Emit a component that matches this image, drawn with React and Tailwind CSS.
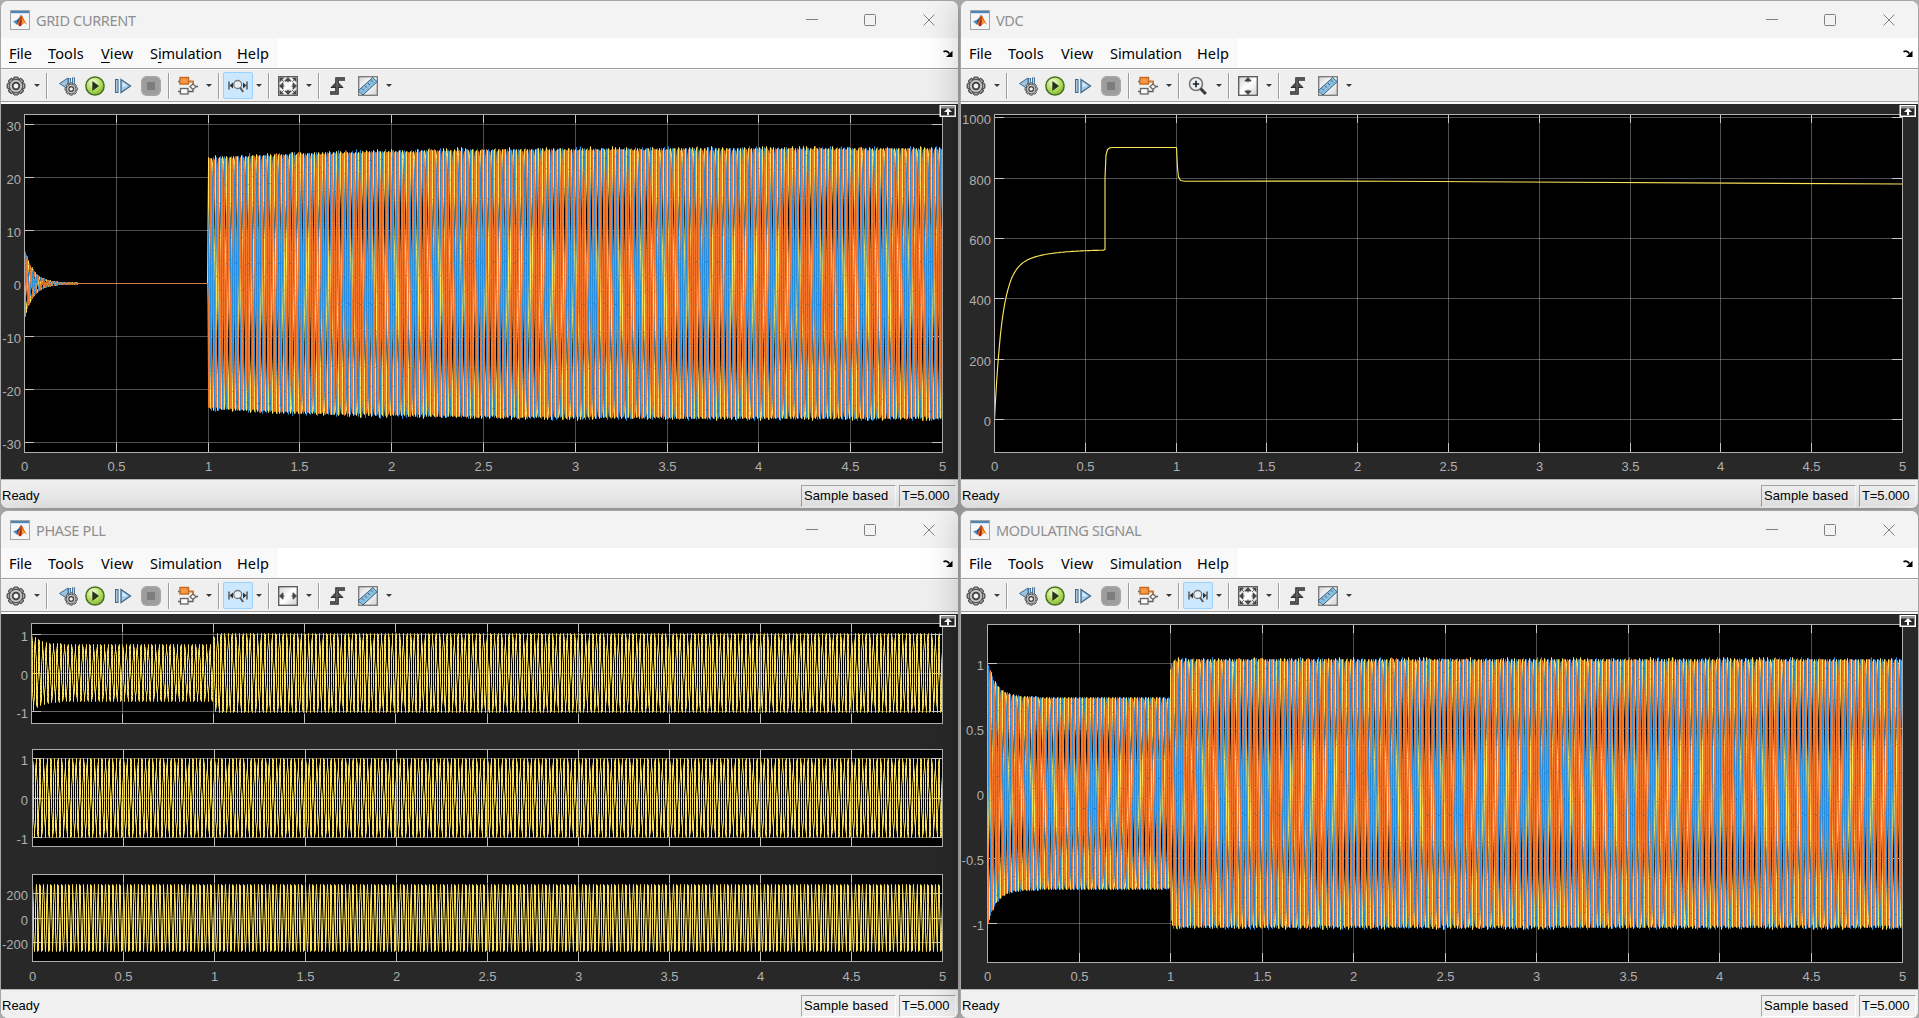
import React from "react";

const YELLOW = "#fce35a";
const BLUE = "#268cdd";
const ORANGE = "#f4772c";
const AXIS = "#afafaf";

/* ---------- signal helpers ---------- */

const noise = (n) => {
  const s = Math.sin(n * 127.1 + 11.7) * 43758.5453;
  return s - Math.floor(s);
};

function wavePath({ left, right, zero, unit, amp, phase = 0, jitter = 0, freq = 50, steps = 20 }) {
  const total = 5 * freq * steps;
  let d = "";
  let last = "";
  for (let i = 0; i <= total; i++) {
    const t = i / (freq * steps);
    const half = Math.floor(t * freq * 2 + phase / Math.PI);
    const a = amp(t) + (t > 1 ? jitter * Math.pow(noise(half + phase * 7), 3) : 0);
    const v = a * Math.sin(2 * Math.PI * freq * t + phase);
    const x = Math.round(left + (t / 5) * (right - left)) + 0.5;
    const y = Math.round(zero - v * unit) + 0.5;
    const p = x + " " + y;
    if (p !== last) d += (d ? "L" : "M") + p;
    last = p;
  }
  return d;
}

/* ---------- chart pieces ---------- */

function Axes({ left, right, top, bottom, yTicks, labelX, xLabels, gridOver, children }) {
  const xs = Array.from({ length: 11 }, (_, i) => Math.round(left + (i * (right - left)) / 10) + 0.5);
  const grid = (opacity) => (
    <g stroke={AXIS} strokeOpacity={opacity}>
      {xs.slice(1, 10).map((x) => (
        <line key={x} x1={x} x2={x} y1={top} y2={bottom} />
      ))}
      {yTicks.map(([y]) => (
        <line key={y} x1={left} x2={right} y1={y + 0.5} y2={y + 0.5} />
      ))}
    </g>
  );
  return (
    <g>
      <rect x={left} y={top} width={right - left} height={bottom - top} fill="#000" />
      {grid(0.45)}
      <g stroke="#c4c4c4">
        {xs.slice(1, 10).map((x) => (
          <path key={x} d={`M${x} ${top}v9M${x} ${bottom}v-9`} />
        ))}
        {yTicks.map(([y]) => (
          <path key={y} d={`M${left} ${y + 0.5}h10M${right} ${y + 0.5}h-10`} />
        ))}
      </g>
      {children}
      {gridOver && grid(0.22)}
      <rect x={left + 0.5} y={top + 0.5} width={right - left} height={bottom - top} fill="none" stroke={AXIS} />
      <g fill={AXIS} fontFamily="Liberation Sans, Arial, sans-serif" fontSize="13">
        {yTicks.map(([y, label]) => (
          <text key={y} x={labelX} y={y + 7} textAnchor="end">
            {label}
          </text>
        ))}
        {xLabels &&
          xs.map((x, i) => (
            <text key={x} x={x} y="470.5" textAnchor="middle">
              {i / 2}
            </text>
          ))}
      </g>
    </g>
  );
}

const Trace = ({ color, d, width = 1 }) => (
  <path d={d} fill="none" stroke={color} strokeWidth={width} strokeLinejoin="bevel" />
);

function ThreePhase({ spec }) {
  const k = (2 * Math.PI) / 3;
  return (
    <>
      <Trace color={YELLOW} d={wavePath({ ...spec, phase: 1.2 })} />
      <Trace color={BLUE} d={wavePath({ ...spec, phase: 1.2 - k })} />
      <Trace color={ORANGE} d={wavePath({ ...spec, phase: 1.2 + k })} />
    </>
  );
}

const modAmp = (t) => (t < 1 ? 0.735 + 0.28 * Math.exp(-t / 0.045) + 0.02 * Math.exp(-t / 0.3) : 1.03 - 0.1 * Math.exp(-(t - 1) / 0.006));

function GridCurrentPlot() {
  const amp = (t) =>
    t < 1 ? 6.2 * Math.exp(-t / 0.045) + 0.6 * Math.exp(-t / 0.15) : 25.5 - 1.9 * Math.exp(-(t - 1) / 0.8);
  return (
    <Axes
      left={24}
      right={942}
      top={114}
      bottom={452}
      labelX={21}
      xLabels
      yTicks={[
        [124, "30"],
        [177, "20"],
        [230, "10"],
        [283, "0"],
        [336, "-10"],
        [389, "-20"],
        [442, "-30"],
      ]}
    >
      <ThreePhase spec={{ left: 24, right: 942, zero: 283, unit: 5.3, amp, jitter: 0.5 }} />
    </Axes>
  );
}

function VdcPlot() {
  let d = "M34.5 419.5";
  for (let i = 1; i <= 110; i++) {
    const t = (i / 110) * 0.6;
    const v = 562 - 470 * Math.exp(-t / 0.04) - 92 * Math.exp(-t / 0.16);
    d += `L${(34.5 + t * 181.6).toFixed(1)} ${(419.5 - v * 0.3025).toFixed(1)}`;
  }
  d += "L145 249.5L145 178L146 155L147.5 149.5L150 147.8L154 147.5L216.5 147.5L217.5 168L218.5 177L220.5 180.5L225 181.2L380 181L560 182L942 184";
  return (
    <Axes
      left={34}
      right={942}
      top={114}
      bottom={452}
      labelX={31}
      xLabels
      yTicks={[
        [117, "1000"],
        [178, "800"],
        [238, "600"],
        [298, "400"],
        [359, "200"],
        [419, "0"],
      ]}
    >
      <Trace color={YELLOW} d={d} width={1.15} />
    </Axes>
  );
}

function PhasePllPlot() {
  return (
    <>
      <Axes left={31} right={942} top={113} bottom={213} labelX={28} gridOver yTicks={[[124, "1"], [163, "0"], [201, "-1"]]}>
        <Trace color={YELLOW} d={wavePath({ left: 31, right: 942, zero: 162.5, unit: 38.5, amp: modAmp, phase: 1.2 })} />
      </Axes>
      <Axes left={32} right={942} top={239} bottom={336} labelX={28} gridOver yTicks={[[248, "1"], [288, "0"], [327, "-1"]]}>
        <Trace color={YELLOW} d={wavePath({ left: 32, right: 942, zero: 287.5, unit: 39.5, amp: () => 1, phase: 1.2 })} />
      </Axes>
      <Axes
        left={32}
        right={942}
        top={364}
        bottom={451}
        labelX={28}
        gridOver
        xLabels
        yTicks={[
          [383, "200"],
          [408, "0"],
          [432, "-200"],
        ]}
      >
        <Trace
          color={YELLOW}
          d={wavePath({ left: 32, right: 942, zero: 407.5, unit: 0.123, amp: () => 288, phase: 1.2, steps: 8 })}
        />
      </Axes>
    </>
  );
}

function ModulatingPlot() {
  return (
    <Axes
      left={27}
      right={942}
      top={114}
      bottom={452}
      labelX={24}
      xLabels
      yTicks={[
        [153, "1"],
        [218, "0.5"],
        [283, "0"],
        [348, "-0.5"],
        [413, "-1"],
      ]}
    >
      <ThreePhase spec={{ left: 27, right: 942, zero: 283, unit: 130, amp: modAmp, jitter: 0.02 }} />
    </Axes>
  );
}

/* ---------- icons ---------- */

function MatlabIcon() {
  return (
    <svg className="block h-5 w-5" viewBox="0 0 20 20">
      <rect x=".5" y=".5" width="19" height="19" fill="#f4f6f8" stroke="#a4a4a4" />
      <rect x="1" y="1" width="18" height="2.2" fill="#4d87b8" />
      <path d="M3 11.6l4.2-1.8 1.7 1.6-2.2 3.1z" fill="#3f91c9" />
      <path d="M7.2 9.8c1.4-.4 2.3-2.8 3.8-4.7l-.6 5.4-3.7 4z" fill="#1e4f86" />
      <path d="M11 5c-1 2.300-2.100 5-4.300 9.500 1.600-.4 2.200 1.800 3.200 1.800 1.900-.5 2.500-3.300 4.200-3.300 1.200 0 1.600.7 2.900 1.500C14.600 11.800 13 5.500 11 5z" fill="#e2561e" />
      <path d="M11 5c-.2 3-.6 6.500-2 10.800.4.500.7.500 1 .5 1.800-.5 2.400-3.200 3.800-3.300C12.500 11 12 7 11 5z" fill="#a02113" />
      <path d="M11.400 5.300c.7 3 2.200 6.600 4.800 8.700-2-1.800-3.600-.6-5 1.400.8-3 .8-6.500.2-10.100z" fill="#f7a12c" />
    </svg>
  );
}

const GearShape = ({ cx, cy, r }) => (
  <g transform={`translate(${cx} ${cy}) scale(${r / 9})`}>
    {[0, 45, 90, 135].map((a) => (
      <rect key={a} x="-2.300" y="-8.800" width="4.600" height="17.600" rx="1" fill="#b4b4b4" stroke="#4e4e4e" strokeWidth="1.300" transform={`rotate(${a})`} />
    ))}
    <circle r="6.600" fill="#bdbdbd" stroke="#555" strokeWidth="1.200" />
    <circle r="6" fill="#c4c4c4" />
    <circle r="3.300" fill="#f2f2f2" stroke="#3f3f3f" strokeWidth="1.800" />
  </g>
);

const Icon = ({ children, className = "" }) => (
  <svg className={"block h-5 w-5 shrink-0 " + className} viewBox="0 0 20 20">
    {children}
  </svg>
);

const GearIcon = () => (
  <Icon>
    <GearShape cx={10} cy={10} r={9} />
  </Icon>
);

const StepBackIcon = () => (
  <Icon className="ml-[10px]">
    <path d="M1.500 7.500L10 2v11z" fill="#9cc3e0" stroke="#3a6a94" />
    <path d="M11.500 2v7M15.500 1.500v7" stroke="#3a6a94" strokeWidth="3" />
    <path d="M11.500 2.500v7M15.500 2v7" stroke="#b9d7ec" strokeWidth="1.200" />
    <GearShape cx={13.2} cy={13} r={6.300} />
  </Icon>
);

const RunIcon = () => (
  <Icon className="ml-[7px]">
    <defs>
      <radialGradient id="run" cx=".4" cy=".3" r=".75">
        <stop offset="0" stopColor="#f4fbd8" />
        <stop offset=".55" stopColor="#b4dc62" />
        <stop offset="1" stopColor="#7db32f" />
      </radialGradient>
    </defs>
    <circle cx="10" cy="10" r="9.100" fill="url(#run)" stroke="#467020" strokeWidth="1.500" />
    <path d="M7.300 5l6.700 5-6.700 5z" fill="#26331e" />
  </Icon>
);

const StepForwardIcon = () => (
  <Icon className="ml-[9px]">
    <rect x="1.500" y="3.500" width="2.500" height="13" fill="#a8cbe6" stroke="#41698c" />
    <path d="M7 3.500v13h0M7 3.500l9.500 6.500L7 16.500z" fill="#a3cdea" stroke="#41698c" strokeWidth="1.300" />
    <path d="M8.500 6l5 3.700-5 1z" fill="#d7ebf8" />
  </Icon>
);

const StopIcon = () => (
  <Icon className="ml-[7px]">
    <rect x="0" y="0" width="20" height="20" rx="6" fill="#9d9d9d" />
    <rect x=".8" y=".8" width="18.400" height="18.400" rx="5.500" fill="none" stroke="#aaa" />
    <rect x="6" y="6" width="8" height="8" fill="#7d7d7d" />
  </Icon>
);

const BlocksIcon = () => (
  <Icon>
    <path d="M0 5.500h2.500M10.500 5.500h4.500v4M0 15.500h2.500M10 15.500h5v-3M18 10.500h2" fill="none" stroke="#5e5e5e" strokeWidth="1.300" />
    <path d="M10.500 5.500h4.500v4" fill="none" stroke="#d4782c" strokeWidth="1.300" />
    <rect x="2" y="1.500" width="8.500" height="6.500" fill="#f09a4a" stroke="#cc6516" strokeWidth="1.400" />
    <rect x="2.500" y="12.500" width="7.500" height="5.500" fill="#fafafa" stroke="#666" strokeWidth="1.300" />
    <path d="M15 8l3 2.700-3 2.700-3-2.700z" fill="#fafafa" stroke="#666" strokeWidth="1.200" />
  </Icon>
);

const ZoomXIcon = () => (
  <Icon>
    <path d="M1 5.500v8M19 5.500v8" stroke="#333" strokeWidth="1.200" />
    <path d="M1.500 9.500l3.500-3v6zM18.500 9.500l-3.500-3v6z" fill="#333" />
    <circle cx="9.700" cy="8.500" r="4" fill="#e7f2fb" stroke="#777" strokeWidth="1.300" />
    <path d="M12 11.500l3.200 4.500" stroke="#555" strokeWidth="1.900" />
  </Icon>
);

const ZoomInIcon = () => (
  <Icon>
    <circle cx="8" cy="8" r="6.500" fill="#e9f0f5" stroke="#777" strokeWidth="1.600" />
    <path d="M8 4.800v6.400M4.800 8h6.400" stroke="#222" strokeWidth="1.700" />
    <path d="M12.500 12.500l5.300 5.500" stroke="#3b3b3b" strokeWidth="3.200" />
  </Icon>
);

const FitFrame = ({ children }) => (
  <Icon>
    <defs>
      <linearGradient id="fit" x1="0" y1="0" x2="1" y2="1">
        <stop offset="0" stopColor="#d2d2d2" />
        <stop offset=".5" stopColor="#fff" />
        <stop offset="1" stopColor="#cfcfcf" />
      </linearGradient>
    </defs>
    <rect x=".7" y=".7" width="18.600" height="18.600" fill="url(#fit)" stroke="#555" strokeWidth="1.300" />
    <g fill="#444" stroke="#444">{children}</g>
  </Icon>
);

const V_ARROWS = "M10 1.500l3.200 3.500H6.800zM10 18.500l3.200-3.500H6.800zM10 4v2.500M10 16v-2.500";
const H_ARROWS = "M1.500 10l3.500-3.200v6.400zM18.500 10l-3.500-3.200v6.400zM4 10h2.500M16 10h-2.500";

const FIT_SHAPES = {
  both: <path strokeWidth=".8" d={V_ARROWS + H_ARROWS + "M2 2h3.500L2 5.500zM18 2h-3.500L18 5.500zM2 18h3.500L2 14.500zM18 18h-3.500l3.500-3.500zM3 3l3 3M17 3l-3 3M3 17l3-3M17 17l-3-3"} />,
  y: <path strokeWidth=".9" d={V_ARROWS} />,
  x: <path strokeWidth=".9" d={H_ARROWS} />,
};

const TriggerIcon = () => (
  <Icon className="ml-[8px]">
    <path d="M2 17h7V3h8" fill="none" stroke="#2e2e2e" strokeWidth="3.600" />
    <path d="M9 5.500l6 6H3z" fill="#4a4a4a" stroke="#2e2e2e" strokeWidth="1" />
    <path d="M2 17h7V3h8" fill="none" stroke="#777" strokeWidth="1.100" />
  </Icon>
);

const RulerIcon = () => (
  <Icon className="ml-[10px]">
    <rect x=".7" y=".7" width="18.600" height="18.600" fill="url(#fit)" stroke="#777" strokeWidth="1.300" />
    <path d="M0 14.800L14.800 1.500l4.400 4.200L5 19z" fill="#8cc0e0" stroke="#33607f" />
    <path d="M4 12.500l1.800 2M7 9.700l1.800 2M10 7l1.800 2M13 4.300l1.800 2" stroke="#33607f" />
  </Icon>
);

const Caret = ({ className }) => (
  <svg className={"block h-[3px] w-[6px] shrink-0 " + className} viewBox="0 0 6 3">
    <path d="M0 0h6L3 3z" fill="#3a3a3a" />
  </svg>
);

const Divider = ({ className }) => (
  <div className={"h-[26px] w-[2px] shrink-0 border-l border-[#9c9c9c] bg-white " + className} />
);

/* ---------- window chrome ---------- */

const MENUS = [
  ["F", "", "ile", "w-[39px]", "-tracking-[0.1px]"],
  ["T", "", "ools", "w-[53px]", "tracking-[0.1px]"],
  ["V", "", "iew", "w-[49px]", "tracking-[0.1px]"],
  ["i", "S", "mulation", "w-[87px]", "-tracking-[0.1px]"],
  ["H", "", "elp", "w-[40px]", "tracking-[0.1px]"],
];

function TitleBar({ title }) {
  return (
    <div className="flex h-[37px] shrink-0 items-center bg-[#f3f3f3] pl-[9px] pr-[23px]">
      <MatlabIcon />
      <span className="ml-[6px] text-[14.5px] leading-5 -tracking-[0.35px] whitespace-nowrap text-[#8f8f8f]">{title}</span>
      <svg className="ml-auto block h-3 w-[129px]" viewBox="0 0 129 12" fill="none" stroke="#808080">
        <path d="M0 5.500h12" />
        <rect x="58.500" y=".5" width="11" height="11" rx="1" />
        <path d="M117.500 .5l11 11M128.500 .5l-11 11" />
      </svg>
    </div>
  );
}

function MenuBar({ mnemonics }) {
  return (
    <div className="flex h-[30px] shrink-0 items-center justify-between bg-white pr-[5px]">
      <div className="flex h-full w-[277px] items-center bg-[#f9f9f9] pl-2 pt-px text-[14.5px] text-black">
        {MENUS.map(([key, before, after, width, tracking]) => (
          <span key={after} className={width + " " + tracking + " whitespace-nowrap"}>
            {before}
            <span className={mnemonics ? "underline underline-offset-[3px]" : ""}>{key}</span>
            {after}
          </span>
        ))}
      </div>
      <svg className="block h-[7px] w-[10px]" viewBox="0 0 10 7">
        <path d="M.5 1.800C3 .4 5 1.500 6.300 3.500" fill="none" stroke="#000" strokeWidth="1.700" />
        <path d="M9.500 .8V7H3z" fill="#000" />
      </svg>
    </div>
  );
}

function ToolBar({ zoom, fit }) {
  return (
    <div className="flex h-[36px] shrink-0 flex-col border-t border-[#9d9d9d] bg-[#f9f9f9]">
      <div className="mt-px flex h-[31px] shrink-0 items-center bg-[#efefef] pl-[5px]">
        <GearIcon />
        <Caret className="ml-[8px]" />
        <Divider className="ml-[6px]" />
        <StepBackIcon />
        <RunIcon />
        <StepForwardIcon />
        <StopIcon />
        <Divider className="ml-[7px]" />
        <div className="ml-2">
          <BlocksIcon />
        </div>
        <Caret className="ml-[8px]" />
        <Divider className="ml-[6px]" />
        <div
          className={
            "ml-[3px] flex h-[27px] w-[30px] items-center justify-center rounded-[2px] border " +
            (zoom === "x" ? "border-[#99d1ff] bg-[#cce8ff]" : "border-transparent")
          }
        >
          {zoom === "x" ? <ZoomXIcon /> : <ZoomInIcon />}
        </div>
        <Caret className="ml-[3px]" />
        <Divider className="ml-[6px]" />
        <div className="ml-2">
          <FitFrame>{FIT_SHAPES[fit]}</FitFrame>
        </div>
        <Caret className="ml-[8px]" />
        <Divider className="ml-[6px]" />
        <TriggerIcon />
        <RulerIcon />
        <Caret className="ml-[8px]" />
      </div>
      <div className="h-px bg-[#9d9d9d]" />
    </div>
  );
}

function StatusBar() {
  const cell = "flex h-[22px] items-center border border-b-white border-l-[#a3a3a3] border-r-white border-t-[#a3a3a3] pl-[2px]";
  return (
    <div className="flex h-[30px] shrink-0 items-start border-t border-[#b5b5b5] bg-[#f0f0f0] pr-[2px] font-['Liberation_Sans',Arial,sans-serif] text-[13px] leading-[16px] text-black">
      <span className="pl-px pt-[8px]">Ready</span>
      <div className="ml-auto mt-[5px] flex gap-[3px]">
        <div className={cell + " w-[95px] tracking-[0.1px]"}>Sample based</div>
        <div className={cell + " w-[57px] -tracking-[0.1px]"}>T=5.000</div>
      </div>
    </div>
  );
}

function ScopeWindow({ title, mnemonics, zoom = "x", fit = "both", children }) {
  return (
    <section className="flex h-[509px] w-[959px] flex-col overflow-hidden rounded-[8px] border border-[#a6a6a6] bg-[#f0f0f0] shadow-[0_2px_36px_rgba(0,0,0,0.22)]">
      <TitleBar title={title} />
      <MenuBar mnemonics={mnemonics} />
      <ToolBar zoom={zoom} fit={fit} />
      <svg className="block h-[375px] w-[957px] shrink-0" viewBox="1 104 957 375">
        <rect x="1" y="104" width="957" height="375" fill="#282828" />
        {children}
        <rect x="939.500" y="105" width="16.500" height="12" fill="#fff" />
        <rect x="941" y="106.500" width="13.500" height="9" fill="#282828" />
        <rect x="941" y="106.500" width="13.500" height="2" fill="#999" />
        <path d="M948 108l4 4h-3v3h-2v-3h-3z" fill="#fff" />
      </svg>
      <StatusBar />
    </section>
  );
}

export default function App() {
  return (
    <main className="grid h-[1018px] w-[1919px] grid-cols-[959px_959px] grid-rows-[509px_509px] gap-px overflow-hidden bg-[#b9b9b9] font-['Noto_Sans',sans-serif]">
      <ScopeWindow title="GRID CURRENT" mnemonics>
        <GridCurrentPlot />
      </ScopeWindow>
      <ScopeWindow title="VDC" zoom="in" fit="y">
        <VdcPlot />
      </ScopeWindow>
      <ScopeWindow title="PHASE PLL" fit="x">
        <PhasePllPlot />
      </ScopeWindow>
      <ScopeWindow title="MODULATING SIGNAL">
        <ModulatingPlot />
      </ScopeWindow>
    </main>
  );
}
